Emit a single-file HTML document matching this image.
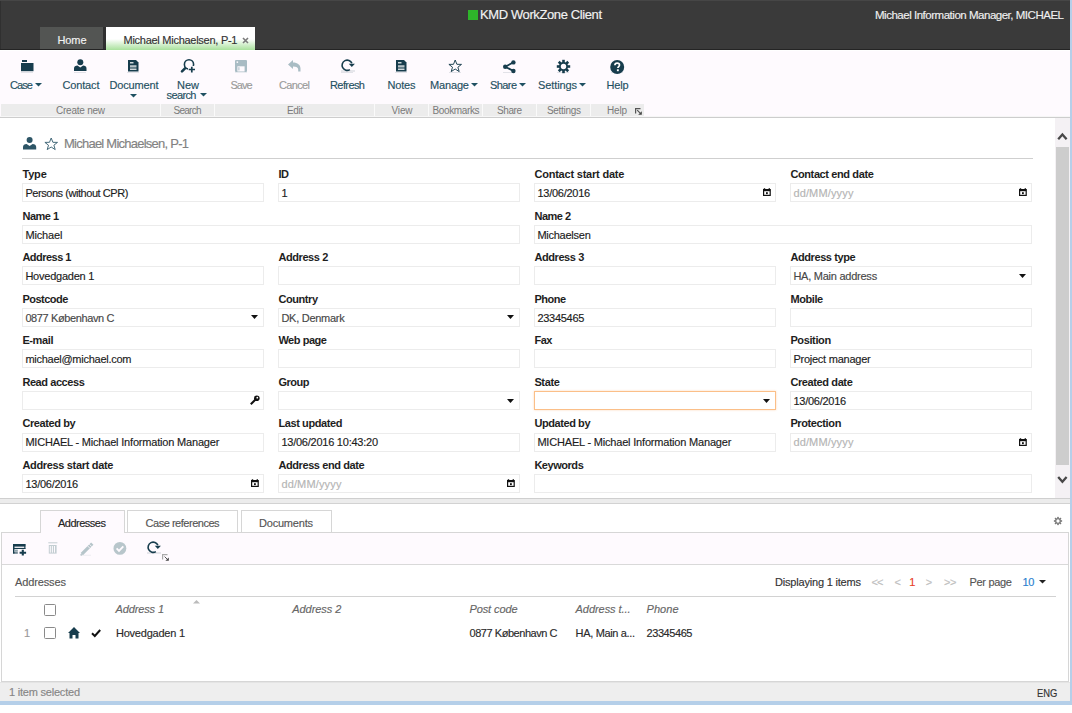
<!DOCTYPE html>
<html><head><meta charset="utf-8"><style>
html,body{margin:0;padding:0;width:1072px;height:713px;overflow:hidden;background:#fff}
body{position:relative;font-family:'Liberation Sans', sans-serif}
div{position:absolute}
.t{white-space:pre}
svg{position:absolute;display:block}
</style></head><body>
<div style="position:absolute;left:0px;top:0px;width:1072px;height:713px;background:#fff"></div>
<div style="position:absolute;left:0px;top:0px;width:1070px;height:50px;background:#3a3a3a"></div>
<div style="position:absolute;left:0px;top:0px;width:1070px;height:1px;background:#464646"></div>
<div style="position:absolute;left:0px;top:1px;width:1px;height:49px;background:#303030"></div>
<div style="position:absolute;left:468px;top:10px;width:10px;height:10px;background:#2eb52a"></div>
<div style="position:absolute;left:40px;top:27px;width:63px;height:23px;background:#535553"></div>
<div style="position:absolute;left:103px;top:27px;width:3px;height:23px;background:#2f2f2f"></div>
<div style="position:absolute;left:0px;top:49px;width:1070px;height:1px;background:#242424"></div>
<div style="position:absolute;left:106px;top:27px;width:149px;height:23px;background:linear-gradient(to bottom,#fff 0,#fff 12px,#a9e19c 23px)"></div>
<svg style="position:absolute;left:242px;top:37px" width="7" height="7" viewBox="0 0 7 7"><path d="M1 1L6 6M6 1L1 6" stroke="#7a7a7a" stroke-width="1.6"/></svg>
<div style="position:absolute;left:0px;top:50px;width:1070px;height:67px;background:#fefafe"></div>
<div style="position:absolute;left:0px;top:50px;width:1070px;height:1px;background:#ffffff"></div>
<div style="position:absolute;left:1px;top:104px;width:643px;height:12px;background:#ececec"></div>
<div style="position:absolute;left:160px;top:104px;width:1px;height:12px;background:#fafafa"></div>
<div style="position:absolute;left:214px;top:104px;width:1px;height:12px;background:#fafafa"></div>
<div style="position:absolute;left:374px;top:104px;width:1px;height:12px;background:#fafafa"></div>
<div style="position:absolute;left:428px;top:104px;width:1px;height:12px;background:#fafafa"></div>
<div style="position:absolute;left:482px;top:104px;width:1px;height:12px;background:#fafafa"></div>
<div style="position:absolute;left:536px;top:104px;width:1px;height:12px;background:#fafafa"></div>
<div style="position:absolute;left:590px;top:104px;width:1px;height:12px;background:#fafafa"></div>
<div style="position:absolute;left:0px;top:116px;width:1070px;height:1px;background:#f6f6f6"></div>
<div style="position:absolute;left:0px;top:117px;width:1070px;height:1px;background:#cdcdcd"></div>
<svg style="position:absolute;left:634.5px;top:107.5px;overflow:visible" width="7" height="7" viewBox="0 0 7 7"><path d="M0.6 5.5V0.6H5.5" fill="none" stroke="#555" stroke-width="1.2"/><path d="M2.2 2.2L5.2 5.2" stroke="#555" stroke-width="1.2"/><path d="M6.8 6.8H3.2L6.8 3.2Z" fill="#444"/></svg>
<svg style="position:absolute;left:34.7px;top:83px" width="7" height="4" viewBox="0 0 7 4"><path d="M0 0H7L3.5 3.5Z" fill="#1f5062"/></svg>
<svg style="position:absolute;left:130px;top:93.5px" width="7" height="4" viewBox="0 0 7 4"><path d="M0 0H7L3.5 3.5Z" fill="#1f5062"/></svg>
<svg style="position:absolute;left:199.5px;top:93.3px" width="7" height="4" viewBox="0 0 7 4"><path d="M0 0H7L3.5 3.5Z" fill="#1f5062"/></svg>
<svg style="position:absolute;left:471.2px;top:83px" width="7" height="4" viewBox="0 0 7 4"><path d="M0 0H7L3.5 3.5Z" fill="#1f5062"/></svg>
<svg style="position:absolute;left:518.8px;top:83px" width="7" height="4" viewBox="0 0 7 4"><path d="M0 0H7L3.5 3.5Z" fill="#1f5062"/></svg>
<svg style="position:absolute;left:578.8px;top:83px" width="7" height="4" viewBox="0 0 7 4"><path d="M0 0H7L3.5 3.5Z" fill="#1f5062"/></svg>
<svg style="position:absolute;left:21px;top:60px;overflow:visible" width="13" height="12" viewBox="0 0 13 12"><rect x="1" y="0" width="5" height="2" fill="#173d4d"/><rect x="0" y="3" width="12.5" height="8.2" fill="#173d4d"/></svg>
<svg style="position:absolute;left:74px;top:59px;overflow:visible" width="13" height="13" viewBox="0 0 13 13"><circle cx="6.3" cy="3.2" r="3" fill="#173d4d"/><path d="M0 12V9.5C0 7.5 1.5 6.6 3.5 6.6L6.3 8.6L9.1 6.6C11 6.6 12.5 7.5 12.5 9.5V12Z" fill="#173d4d"/></svg>
<svg style="position:absolute;left:128px;top:59.5px;overflow:visible" width="11" height="12" viewBox="0 0 11 12"><path d="M0 0H8L10.5 2.5V11.5H0Z" fill="#173d4d"/><rect x="2" y="2.2" width="3.5" height="1.2" fill="#fff"/><rect x="2" y="5.2" width="6.5" height="2.3" fill="#b7c3c8"/><rect x="2" y="8.6" width="6.5" height="1.2" fill="#fff"/></svg>
<svg style="position:absolute;left:180px;top:58px;overflow:visible" width="16" height="16" viewBox="0 0 16 16"><circle cx="9" cy="6.4" r="4.6" fill="none" stroke="#173d4d" stroke-width="1.6"/><path d="M2 13.3L5 10.3" stroke="#173d4d" stroke-width="2.6" stroke-linecap="round"/><rect x="8" y="8" width="8" height="7" fill="#fefafe"/><path d="M8.7 11.5H15M11.8 8.7V14.5" stroke="#173d4d" stroke-width="1.7"/></svg>
<svg style="position:absolute;left:235px;top:59.5px;overflow:visible" width="13" height="12" viewBox="0 0 13 12"><rect x="0" y="0" width="12" height="12" rx="1" fill="#a9bcc4"/><rect x="1.6" y="1.4" width="1.5" height="1.5" fill="#fefafe"/><rect x="2.4" y="6.3" width="7.2" height="5.2" fill="#fefafe"/><rect x="3.4" y="7.2" width="1" height="3.2" fill="#a9bcc4"/><rect x="0" y="12.2" width="12" height="0.8" fill="#a9bcc4" opacity="0.3"/></svg>
<svg style="position:absolute;left:288px;top:60px;overflow:visible" width="13" height="12" viewBox="0 0 13 12"><path d="M0 4.5L5 0V2.6C9.5 2.6 12.5 5 12.5 8.5V11.5H10.2V9.5C10.2 7.5 8.5 6.4 5 6.4V9Z" fill="#a9bcc4"/></svg>
<svg style="position:absolute;left:341px;top:59px;overflow:visible" width="15" height="13" viewBox="0 0 15 13"><path d="M8.85 10.6A5.1 5.1 0 1 1 10.9 4.3" fill="none" stroke="#173d4d" stroke-width="1.6"/><path d="M7.8 4.7H13.9L10.85 8.1Z" fill="#173d4d"/><rect x="0" y="11.3" width="14" height="1.4" fill="#173d4d" opacity="0.15"/></svg>
<svg style="position:absolute;left:395.5px;top:59.5px;overflow:visible" width="11" height="12" viewBox="0 0 11 12"><path d="M0 0H8L10.5 2.5V11.5H0Z" fill="#173d4d"/><rect x="2" y="2.2" width="3.5" height="1.2" fill="#fff"/><rect x="2" y="5.2" width="6.5" height="2.3" fill="#b7c3c8"/><rect x="2" y="8.6" width="6.5" height="1.2" fill="#fff"/></svg>
<svg style="position:absolute;left:448px;top:59px;overflow:visible" width="15" height="14" viewBox="0 0 15 14"><path d="M7.2 1L8.9 5.3L13.5 5.4L9.9 8.2L11.2 12.6L7.2 10L3.2 12.6L4.5 8.2L0.9 5.4L5.5 5.3Z" fill="none" stroke="#173d4d" stroke-width="0.95" stroke-linejoin="round"/></svg>
<svg style="position:absolute;left:503px;top:59.5px;overflow:visible" width="13" height="13" viewBox="0 0 13 13"><path d="M10.5 2.3L2.3 6.7L10.5 11" fill="none" stroke="#173d4d" stroke-width="1.8"/><circle cx="10.4" cy="2.4" r="2.2" fill="#173d4d"/><circle cx="2.2" cy="6.7" r="2.2" fill="#173d4d"/><circle cx="10.4" cy="11" r="2.2" fill="#173d4d"/></svg>
<svg style="position:absolute;left:557px;top:59.5px;overflow:visible" width="13" height="13" viewBox="0 0 13 13"><g><rect x="5.2" y="-0.2" width="2.6" height="3.3" fill="#173d4d" transform="rotate(0 6.5 6.5)"/><rect x="5.2" y="-0.2" width="2.6" height="3.3" fill="#173d4d" transform="rotate(45 6.5 6.5)"/><rect x="5.2" y="-0.2" width="2.6" height="3.3" fill="#173d4d" transform="rotate(90 6.5 6.5)"/><rect x="5.2" y="-0.2" width="2.6" height="3.3" fill="#173d4d" transform="rotate(135 6.5 6.5)"/><rect x="5.2" y="-0.2" width="2.6" height="3.3" fill="#173d4d" transform="rotate(180 6.5 6.5)"/><rect x="5.2" y="-0.2" width="2.6" height="3.3" fill="#173d4d" transform="rotate(225 6.5 6.5)"/><rect x="5.2" y="-0.2" width="2.6" height="3.3" fill="#173d4d" transform="rotate(270 6.5 6.5)"/><rect x="5.2" y="-0.2" width="2.6" height="3.3" fill="#173d4d" transform="rotate(315 6.5 6.5)"/><circle cx="6.5" cy="6.5" r="4.5" fill="#173d4d"/><circle cx="6.5" cy="6.5" r="2.7" fill="#fefafe"/></g></svg>
<svg style="position:absolute;left:610px;top:59.5px;overflow:visible" width="14.5" height="14" viewBox="0 0 14.5 14"><circle cx="7.2" cy="7" r="7" fill="#173d4d"/><path d="M4.9 5.3C4.9 3.9 5.9 3.1 7.2 3.1C8.6 3.1 9.5 4 9.5 5.1C9.5 6.5 7.9 6.8 7.9 8.1" fill="none" stroke="#fff" stroke-width="1.7"/><rect x="6.9" y="9.3" width="1.9" height="1.9" fill="#fff"/></svg>
<div style="position:absolute;left:21px;top:72px;width:12px;height:1px;background:rgba(23,61,77,0.12)"></div>
<div style="position:absolute;left:74px;top:72px;width:12px;height:1px;background:rgba(23,61,77,0.12)"></div>
<div style="position:absolute;left:127px;top:72px;width:12px;height:1px;background:rgba(23,61,77,0.12)"></div>
<div style="position:absolute;left:341px;top:72px;width:12px;height:1px;background:rgba(23,61,77,0.12)"></div>
<div style="position:absolute;left:395px;top:72px;width:12px;height:1px;background:rgba(23,61,77,0.12)"></div>
<div style="position:absolute;left:449px;top:72px;width:12px;height:1px;background:rgba(23,61,77,0.12)"></div>
<div style="position:absolute;left:503px;top:72px;width:12px;height:1px;background:rgba(23,61,77,0.12)"></div>
<div style="position:absolute;left:557px;top:72px;width:12px;height:1px;background:rgba(23,61,77,0.12)"></div>
<div style="position:absolute;left:611px;top:72px;width:12px;height:1px;background:rgba(23,61,77,0.12)"></div>
<div style="position:absolute;left:1055px;top:118px;width:15px;height:380px;background:#f4f1f4"></div>
<div style="position:absolute;left:1056px;top:147px;width:13px;height:318px;background:#cdcdcd"></div>
<svg style="position:absolute;left:1057px;top:130.5px;overflow:visible" width="11" height="10" viewBox="0 0 11 10"><path d="M1.2 8.3L5.4 3.6L9.6 8.3" fill="none" stroke="#474747" stroke-width="2.3"/></svg>
<svg style="position:absolute;left:1057px;top:474.5px;overflow:visible" width="11" height="10" viewBox="0 0 11 10"><path d="M1.2 1.9L5.4 6.8L9.6 1.9" fill="none" stroke="#474747" stroke-width="2.3"/></svg>
<svg style="position:absolute;left:23px;top:137px;overflow:visible" width="14" height="13" viewBox="0 0 14 13"><circle cx="6.6" cy="3" r="3" fill="#2d5566"/><path d="M0 12.5V10C0 8 1.5 6.9 3.6 6.9L6.6 9L9.6 6.9C11.7 6.9 13.2 8 13.2 10V12.5Z" fill="#2d5566"/></svg>
<svg style="position:absolute;left:43.5px;top:137px;overflow:visible" width="15" height="14" viewBox="0 0 15 14"><path d="M7.2 1L8.9 5.3L13.5 5.4L9.9 8.2L11.2 12.6L7.2 10L3.2 12.6L4.5 8.2L0.9 5.4L5.5 5.3Z" fill="none" stroke="#3b6273" stroke-width="0.95" stroke-linejoin="round"/></svg>
<div style="position:absolute;left:22px;top:158px;width:1011px;height:1px;background:#cfcfcf"></div>
<div style="position:absolute;left:22px;top:183.2px;width:242px;height:19px;box-sizing:border-box;border:1px solid #ececec;background:#fff;"></div>
<div style="position:absolute;left:278px;top:183.2px;width:242px;height:19px;box-sizing:border-box;border:1px solid #ececec;background:#fff;"></div>
<div style="position:absolute;left:534px;top:183.2px;width:242px;height:19px;box-sizing:border-box;border:1px solid #ececec;background:#fff;"></div>
<svg style="position:absolute;left:763px;top:188.2px;overflow:visible" width="8" height="8" viewBox="0 0 8 8"><path d="M1.5 0.3V1.5M6.3 0.3V1.5" stroke="#111" stroke-width="1.4"/><rect x="0.6" y="1.6" width="6.6" height="5.8" fill="none" stroke="#111" stroke-width="1.2"/><rect x="0.6" y="1.6" width="6.6" height="1.6" fill="#111"/><rect x="3" y="4.2" width="1.8" height="1.9" fill="#111"/></svg>
<div style="position:absolute;left:790px;top:183.2px;width:242px;height:19px;box-sizing:border-box;border:1px solid #ececec;background:#fff;"></div>
<svg style="position:absolute;left:1019px;top:188.2px;overflow:visible" width="8" height="8" viewBox="0 0 8 8"><path d="M1.5 0.3V1.5M6.3 0.3V1.5" stroke="#111" stroke-width="1.4"/><rect x="0.6" y="1.6" width="6.6" height="5.8" fill="none" stroke="#111" stroke-width="1.2"/><rect x="0.6" y="1.6" width="6.6" height="1.6" fill="#111"/><rect x="3" y="4.2" width="1.8" height="1.9" fill="#111"/></svg>
<div style="position:absolute;left:22px;top:224.76999999999998px;width:498px;height:19px;box-sizing:border-box;border:1px solid #ececec;background:#fff;"></div>
<div style="position:absolute;left:534px;top:224.76999999999998px;width:498px;height:19px;box-sizing:border-box;border:1px solid #ececec;background:#fff;"></div>
<div style="position:absolute;left:22px;top:266.34px;width:242px;height:19px;box-sizing:border-box;border:1px solid #ececec;background:#fff;"></div>
<div style="position:absolute;left:278px;top:266.34px;width:242px;height:19px;box-sizing:border-box;border:1px solid #ececec;background:#fff;"></div>
<div style="position:absolute;left:534px;top:266.34px;width:242px;height:19px;box-sizing:border-box;border:1px solid #ececec;background:#fff;"></div>
<div style="position:absolute;left:790px;top:266.34px;width:242px;height:19px;box-sizing:border-box;border:1px solid #ececec;background:#fff;"></div>
<svg style="position:absolute;left:1019px;top:273.84px;overflow:visible" width="7" height="4" viewBox="0 0 7 4"><path d="M0 0H7L3.5 4Z" fill="#111"/></svg>
<div style="position:absolute;left:22px;top:307.90999999999997px;width:242px;height:19px;box-sizing:border-box;border:1px solid #ececec;background:#fff;"></div>
<svg style="position:absolute;left:251px;top:315.40999999999997px;overflow:visible" width="7" height="4" viewBox="0 0 7 4"><path d="M0 0H7L3.5 4Z" fill="#111"/></svg>
<div style="position:absolute;left:278px;top:307.90999999999997px;width:242px;height:19px;box-sizing:border-box;border:1px solid #ececec;background:#fff;"></div>
<svg style="position:absolute;left:507px;top:315.40999999999997px;overflow:visible" width="7" height="4" viewBox="0 0 7 4"><path d="M0 0H7L3.5 4Z" fill="#111"/></svg>
<div style="position:absolute;left:534px;top:307.90999999999997px;width:242px;height:19px;box-sizing:border-box;border:1px solid #ececec;background:#fff;"></div>
<div style="position:absolute;left:790px;top:307.90999999999997px;width:242px;height:19px;box-sizing:border-box;border:1px solid #ececec;background:#fff;"></div>
<div style="position:absolute;left:22px;top:349.48px;width:242px;height:19px;box-sizing:border-box;border:1px solid #ececec;background:#fff;"></div>
<div style="position:absolute;left:278px;top:349.48px;width:242px;height:19px;box-sizing:border-box;border:1px solid #ececec;background:#fff;"></div>
<div style="position:absolute;left:534px;top:349.48px;width:242px;height:19px;box-sizing:border-box;border:1px solid #ececec;background:#fff;"></div>
<div style="position:absolute;left:790px;top:349.48px;width:242px;height:19px;box-sizing:border-box;border:1px solid #ececec;background:#fff;"></div>
<div style="position:absolute;left:22px;top:391.04999999999995px;width:242px;height:19px;box-sizing:border-box;border:1px solid #ececec;background:#fff;"></div>
<svg style="position:absolute;left:250px;top:395.04999999999995px;overflow:visible" width="10" height="10" viewBox="0 0 10 10"><circle cx="6.8" cy="3.2" r="2.8" fill="#111"/><circle cx="7.3" cy="2.7" r="0.9" fill="#fff"/><path d="M5.5 4.5L0.8 9.2" stroke="#111" stroke-width="2"/></svg>
<div style="position:absolute;left:278px;top:391.04999999999995px;width:242px;height:19px;box-sizing:border-box;border:1px solid #ececec;background:#fff;"></div>
<svg style="position:absolute;left:507px;top:398.54999999999995px;overflow:visible" width="7" height="4" viewBox="0 0 7 4"><path d="M0 0H7L3.5 4Z" fill="#111"/></svg>
<div style="position:absolute;left:534px;top:391.04999999999995px;width:242px;height:19px;box-sizing:border-box;border:1px solid #fbbf88;background:#fff;box-shadow:0 0 2px rgba(251,170,100,0.45);"></div>
<svg style="position:absolute;left:763px;top:398.54999999999995px;overflow:visible" width="7" height="4" viewBox="0 0 7 4"><path d="M0 0H7L3.5 4Z" fill="#111"/></svg>
<div style="position:absolute;left:790px;top:391.04999999999995px;width:242px;height:19px;box-sizing:border-box;border:1px solid #ececec;background:#fff;"></div>
<div style="position:absolute;left:22px;top:432.62px;width:242px;height:19px;box-sizing:border-box;border:1px solid #ececec;background:#fff;"></div>
<div style="position:absolute;left:278px;top:432.62px;width:242px;height:19px;box-sizing:border-box;border:1px solid #ececec;background:#fff;"></div>
<div style="position:absolute;left:534px;top:432.62px;width:242px;height:19px;box-sizing:border-box;border:1px solid #ececec;background:#fff;"></div>
<div style="position:absolute;left:790px;top:432.62px;width:242px;height:19px;box-sizing:border-box;border:1px solid #ececec;background:#fff;"></div>
<svg style="position:absolute;left:1019px;top:437.62px;overflow:visible" width="8" height="8" viewBox="0 0 8 8"><path d="M1.5 0.3V1.5M6.3 0.3V1.5" stroke="#111" stroke-width="1.4"/><rect x="0.6" y="1.6" width="6.6" height="5.8" fill="none" stroke="#111" stroke-width="1.2"/><rect x="0.6" y="1.6" width="6.6" height="1.6" fill="#111"/><rect x="3" y="4.2" width="1.8" height="1.9" fill="#111"/></svg>
<div style="position:absolute;left:22px;top:474.19px;width:242px;height:19px;box-sizing:border-box;border:1px solid #ececec;background:#fff;"></div>
<svg style="position:absolute;left:251px;top:479.19px;overflow:visible" width="8" height="8" viewBox="0 0 8 8"><path d="M1.5 0.3V1.5M6.3 0.3V1.5" stroke="#111" stroke-width="1.4"/><rect x="0.6" y="1.6" width="6.6" height="5.8" fill="none" stroke="#111" stroke-width="1.2"/><rect x="0.6" y="1.6" width="6.6" height="1.6" fill="#111"/><rect x="3" y="4.2" width="1.8" height="1.9" fill="#111"/></svg>
<div style="position:absolute;left:278px;top:474.19px;width:242px;height:19px;box-sizing:border-box;border:1px solid #ececec;background:#fff;"></div>
<svg style="position:absolute;left:507px;top:479.19px;overflow:visible" width="8" height="8" viewBox="0 0 8 8"><path d="M1.5 0.3V1.5M6.3 0.3V1.5" stroke="#111" stroke-width="1.4"/><rect x="0.6" y="1.6" width="6.6" height="5.8" fill="none" stroke="#111" stroke-width="1.2"/><rect x="0.6" y="1.6" width="6.6" height="1.6" fill="#111"/><rect x="3" y="4.2" width="1.8" height="1.9" fill="#111"/></svg>
<div style="position:absolute;left:534px;top:474.19px;width:498px;height:19px;box-sizing:border-box;border:1px solid #ececec;background:#fff;"></div>
<div style="position:absolute;left:0px;top:498px;width:1070px;height:1px;background:#cfcfcf"></div>
<div style="position:absolute;left:0px;top:499px;width:1070px;height:4px;background:#ececec"></div>
<div style="position:absolute;left:0px;top:503px;width:1070px;height:1px;background:#d2d2d2"></div>
<svg style="position:absolute;left:1054px;top:517px;overflow:visible" width="8" height="8" viewBox="0 0 13 13"><g><rect x="5.2" y="-0.2" width="2.6" height="3.3" fill="#777" transform="rotate(0 6.5 6.5)"/><rect x="5.2" y="-0.2" width="2.6" height="3.3" fill="#777" transform="rotate(45 6.5 6.5)"/><rect x="5.2" y="-0.2" width="2.6" height="3.3" fill="#777" transform="rotate(90 6.5 6.5)"/><rect x="5.2" y="-0.2" width="2.6" height="3.3" fill="#777" transform="rotate(135 6.5 6.5)"/><rect x="5.2" y="-0.2" width="2.6" height="3.3" fill="#777" transform="rotate(180 6.5 6.5)"/><rect x="5.2" y="-0.2" width="2.6" height="3.3" fill="#777" transform="rotate(225 6.5 6.5)"/><rect x="5.2" y="-0.2" width="2.6" height="3.3" fill="#777" transform="rotate(270 6.5 6.5)"/><rect x="5.2" y="-0.2" width="2.6" height="3.3" fill="#777" transform="rotate(315 6.5 6.5)"/><circle cx="6.5" cy="6.5" r="4.5" fill="#777"/><circle cx="6.5" cy="6.5" r="2.7" fill="#fff"/></g></svg>
<div style="position:absolute;left:1px;top:532px;width:1068px;height:150px;box-sizing:border-box;border:1px solid #d6d6d6;border-top:none;background:#fff"></div>
<div style="position:absolute;left:1px;top:532px;width:1068px;height:1px;background:#d6d6d6"></div>
<div style="position:absolute;left:2px;top:533px;width:1066px;height:31px;background:#fefafe"></div>
<div style="position:absolute;left:2px;top:563.5px;width:1066px;height:1px;background:#d9d9d9"></div>
<div style="position:absolute;left:40px;top:510px;width:85px;height:23px;box-sizing:border-box;border:1px solid #d6d6d6;border-bottom:none;background:#fefafe"></div>
<div style="position:absolute;left:127px;top:510px;width:111px;height:22px;box-sizing:border-box;border:1px solid #d6d6d6;border-bottom:none;background:#fff"></div>
<div style="position:absolute;left:240.5px;top:510px;width:91px;height:22px;box-sizing:border-box;border:1px solid #d6d6d6;border-bottom:none;background:#fff"></div>
<svg style="position:absolute;left:13px;top:543.5px;overflow:visible" width="14" height="12" viewBox="0 0 14 12"><rect x="0" y="0" width="12.4" height="2.6" fill="#173d4d"/><rect x="0" y="3.9" width="12.4" height="1.1" fill="#173d4d"/><rect x="11.3" y="0" width="1.1" height="5" fill="#173d4d"/><rect x="0" y="0" width="1.5" height="9.5" fill="#173d4d"/><rect x="1.5" y="5.6" width="3.3" height="2.2" fill="#8fa3ab"/><rect x="0" y="8.4" width="4.8" height="1.1" fill="#173d4d"/><path d="M6.6 8.7H13.1M9.8 5.8V11.6" stroke="#173d4d" stroke-width="2.1"/></svg>
<svg style="position:absolute;left:47.5px;top:542px;overflow:visible" width="10" height="13" viewBox="0 0 10 13"><rect x="0.3" y="0.3" width="9.1" height="1" fill="#c3ced2"/><rect x="0.8" y="3" width="7.8" height="8.6" fill="#c3ced2"/><rect x="1.8" y="4" width="1" height="6.6" fill="#fefafe"/><rect x="3.9" y="4" width="1" height="6.6" fill="#fefafe"/><rect x="6" y="4" width="1" height="6.6" fill="#fefafe"/></svg>
<svg style="position:absolute;left:80px;top:541.5px;overflow:visible" width="14" height="14" viewBox="0 0 14 14"><path d="M1.8 12.2L12.3 1.7" stroke="#b6c5ca" stroke-width="3.3"/><path d="M0.6 13.4L1.8 12.2" stroke="#b6c5ca" stroke-width="1.5"/><path d="M7.6 3.9L10.1 6.4M9.3 2.2L11.8 4.7" stroke="#fefafe" stroke-width="0.8"/><rect x="1" y="12.8" width="10" height="0.8" fill="#b6c5ca" opacity="0.3"/></svg>
<svg style="position:absolute;left:113px;top:542px;overflow:visible" width="14" height="13" viewBox="0 0 14 13"><circle cx="6.9" cy="6.4" r="6.4" fill="#b8c6cb"/><path d="M3.6 6.4L6 8.8L10.3 4.4" fill="none" stroke="#fefafe" stroke-width="1.9"/></svg>
<svg style="position:absolute;left:147.4px;top:541.3px;overflow:visible" width="15" height="13" viewBox="0 0 15 13"><path d="M8.85 10.6A5.1 5.1 0 1 1 10.9 4.3" fill="none" stroke="#173d4d" stroke-width="1.6"/><path d="M7.8 4.7H13.9L10.85 8.1Z" fill="#173d4d"/><rect x="0" y="11.3" width="14" height="1.4" fill="#173d4d" opacity="0.15"/></svg>
<svg style="position:absolute;left:161.5px;top:554px;overflow:visible" width="7" height="7" viewBox="0 0 7 7"><path d="M0.6 5.5V0.6H5.5" fill="none" stroke="#aaa" stroke-width="1.2"/><path d="M2.6 2.6L5.4 5.4" stroke="#555" stroke-width="1"/><path d="M6.8 6.8H3.4L6.8 3.4Z" fill="#444"/></svg>
<div style="position:absolute;left:15px;top:596px;width:1041px;height:1px;background:#d2d2d2"></div>
<svg style="position:absolute;left:1038.5px;top:580px;overflow:visible" width="7" height="4" viewBox="0 0 7 4"><path d="M0 0H7L3.5 3.5Z" fill="#222"/></svg>
<div style="position:absolute;left:44px;top:604px;width:11.5px;height:11.5px;box-sizing:border-box;border:1.2px solid #8a8a8a;border-radius:1.5px;background:#fff"></div>
<svg style="position:absolute;left:193px;top:599.5px;overflow:visible" width="7" height="4" viewBox="0 0 7 4"><path d="M0 3.5H7L3.5 0Z" fill="#bbb"/></svg>
<div style="position:absolute;left:44px;top:627px;width:11.5px;height:11.5px;box-sizing:border-box;border:1.2px solid #8a8a8a;border-radius:1.5px;background:#fff"></div>
<svg style="position:absolute;left:67.5px;top:627px;overflow:visible" width="12" height="11.5" viewBox="0 0 12 11.5"><path d="M6 0L12 6H10.5V11.5H7.5V8H4.5V11.5H1.5V6H0Z" fill="#173d4d"/></svg>
<svg style="position:absolute;left:91px;top:628.5px;overflow:visible" width="10" height="8" viewBox="0 0 10 8"><path d="M1 4.2L3.8 7L9.2 1" fill="none" stroke="#111" stroke-width="2"/></svg>
<div style="position:absolute;left:0px;top:682px;width:1070px;height:19px;background:#eeeeee"></div>
<div style="position:absolute;left:0px;top:682px;width:1070px;height:1px;background:#e4e4e4"></div>
<div style="position:absolute;left:1070px;top:0px;width:2px;height:705px;background:#b5cfe9"></div>
<div style="position:absolute;left:0px;top:701px;width:1072px;height:4px;background:#b5cfe9"></div>
<div class="t" style="-webkit-text-stroke:0.15px currentColor;left:480px;top:7.9px;font:13px 'Liberation Sans', sans-serif;line-height:13px;color:#f2f2f2;letter-spacing:-0.393px;">KMD WorkZone Client</div>
<div class="t" style="-webkit-text-stroke:0.15px currentColor;left:875px;top:10px;font:11.5px 'Liberation Sans', sans-serif;line-height:11.5px;color:#f0f0f0;letter-spacing:-0.480px;">Michael Information Manager, MICHAEL</div>
<div class="t" style="-webkit-text-stroke:0.15px currentColor;left:57.5px;top:35px;font:11px 'Liberation Sans', sans-serif;line-height:11px;color:#f4f4f4;letter-spacing:-0.115px;">Home</div>
<div class="t" style="-webkit-text-stroke:0.15px currentColor;left:123.5px;top:35px;font:11px 'Liberation Sans', sans-serif;line-height:11px;color:#333;letter-spacing:-0.266px;">Michael Michaelsen, P-1</div>
<div class="t" style="left:56px;top:106px;font:10px 'Liberation Sans', sans-serif;line-height:10px;color:#7a7a7a;letter-spacing:-0.238px;">Create new</div>
<div class="t" style="left:173.5px;top:106px;font:10px 'Liberation Sans', sans-serif;line-height:10px;color:#7a7a7a;letter-spacing:-0.738px;">Search</div>
<div class="t" style="left:287px;top:106px;font:10px 'Liberation Sans', sans-serif;line-height:10px;color:#7a7a7a;letter-spacing:-0.411px;">Edit</div>
<div class="t" style="left:391.5px;top:106px;font:10px 'Liberation Sans', sans-serif;line-height:10px;color:#7a7a7a;letter-spacing:-0.167px;">View</div>
<div class="t" style="left:432.5px;top:106px;font:10px 'Liberation Sans', sans-serif;line-height:10px;color:#7a7a7a;letter-spacing:-0.377px;">Bookmarks</div>
<div class="t" style="left:497px;top:106px;font:10px 'Liberation Sans', sans-serif;line-height:10px;color:#7a7a7a;letter-spacing:-0.422px;">Share</div>
<div class="t" style="left:547px;top:106px;font:10px 'Liberation Sans', sans-serif;line-height:10px;color:#7a7a7a;letter-spacing:-0.306px;">Settings</div>
<div class="t" style="left:607px;top:106px;font:10px 'Liberation Sans', sans-serif;line-height:10px;color:#7a7a7a;letter-spacing:-0.193px;">Help</div>
<div class="t" style="-webkit-text-stroke:0.15px currentColor;left:10px;top:80px;font:11px 'Liberation Sans', sans-serif;line-height:11px;color:#1f5062;letter-spacing:-0.896px;">Case</div>
<div class="t" style="-webkit-text-stroke:0.15px currentColor;left:62.5px;top:80px;font:11px 'Liberation Sans', sans-serif;line-height:11px;color:#1f5062;letter-spacing:-0.154px;">Contact</div>
<div class="t" style="-webkit-text-stroke:0.15px currentColor;left:109.5px;top:80px;font:11px 'Liberation Sans', sans-serif;line-height:11px;color:#1f5062;letter-spacing:-0.163px;">Document</div>
<div class="t" style="-webkit-text-stroke:0.15px currentColor;left:177px;top:80px;font:11px 'Liberation Sans', sans-serif;line-height:11px;color:#1f5062;letter-spacing:-0.008px;">New</div>
<div class="t" style="-webkit-text-stroke:0.15px currentColor;left:166.5px;top:89.5px;font:11px 'Liberation Sans', sans-serif;line-height:11px;color:#1f5062;letter-spacing:-0.606px;">search</div>
<div class="t" style="-webkit-text-stroke:0.15px currentColor;left:230.5px;top:80px;font:11px 'Liberation Sans', sans-serif;line-height:11px;color:#9a9a9a;letter-spacing:-1.026px;">Save</div>
<div class="t" style="-webkit-text-stroke:0.15px currentColor;left:279px;top:80px;font:11px 'Liberation Sans', sans-serif;line-height:11px;color:#9a9a9a;letter-spacing:-0.650px;">Cancel</div>
<div class="t" style="-webkit-text-stroke:0.15px currentColor;left:330px;top:80px;font:11px 'Liberation Sans', sans-serif;line-height:11px;color:#1f5062;letter-spacing:-0.589px;">Refresh</div>
<div class="t" style="-webkit-text-stroke:0.15px currentColor;left:387.5px;top:80px;font:11px 'Liberation Sans', sans-serif;line-height:11px;color:#1f5062;letter-spacing:-0.188px;">Notes</div>
<div class="t" style="-webkit-text-stroke:0.15px currentColor;left:430px;top:80px;font:11px 'Liberation Sans', sans-serif;line-height:11px;color:#1f5062;letter-spacing:-0.153px;">Manage</div>
<div class="t" style="-webkit-text-stroke:0.15px currentColor;left:490px;top:80px;font:11px 'Liberation Sans', sans-serif;line-height:11px;color:#1f5062;letter-spacing:-0.590px;">Share</div>
<div class="t" style="-webkit-text-stroke:0.15px currentColor;left:538px;top:80px;font:11px 'Liberation Sans', sans-serif;line-height:11px;color:#1f5062;letter-spacing:-0.107px;">Settings</div>
<div class="t" style="-webkit-text-stroke:0.15px currentColor;left:606.5px;top:80px;font:11px 'Liberation Sans', sans-serif;line-height:11px;color:#1f5062;letter-spacing:-0.208px;">Help</div>
<div class="t" style="-webkit-text-stroke:0.15px currentColor;left:64px;top:137px;font:13px 'Liberation Sans', sans-serif;line-height:13px;color:#828282;letter-spacing:-0.756px;">Michael Michaelsen, P-1</div>
<div class="t" style="left:22.4px;top:169.0px;font:bold 11px 'Liberation Sans', sans-serif;line-height:11px;color:#1e1e1e;letter-spacing:-0.153px;">Type</div>
<div class="t" style="-webkit-text-stroke:0.15px currentColor;left:25.4px;top:188.0px;font:11px 'Liberation Sans', sans-serif;line-height:11px;color:#1c1c1c;letter-spacing:-0.444px;">Persons (without CPR)</div>
<div class="t" style="left:278.4px;top:169.0px;font:bold 11px 'Liberation Sans', sans-serif;line-height:11px;color:#1e1e1e;letter-spacing:-0.385px;">ID</div>
<div class="t" style="-webkit-text-stroke:0.15px currentColor;left:281.4px;top:188.0px;font:11px 'Liberation Sans', sans-serif;line-height:11px;color:#1c1c1c;letter-spacing:0.000px;">1</div>
<div class="t" style="left:534.4px;top:169.0px;font:bold 11px 'Liberation Sans', sans-serif;line-height:11px;color:#1e1e1e;letter-spacing:-0.208px;">Contact start date</div>
<div class="t" style="-webkit-text-stroke:0.15px currentColor;left:537.4px;top:188.0px;font:11px 'Liberation Sans', sans-serif;line-height:11px;color:#1c1c1c;letter-spacing:-0.248px;">13/06/2016</div>
<div class="t" style="left:790.4px;top:169.0px;font:bold 11px 'Liberation Sans', sans-serif;line-height:11px;color:#1e1e1e;letter-spacing:-0.390px;">Contact end date</div>
<div class="t" style="-webkit-text-stroke:0.15px currentColor;left:793.4px;top:188.0px;font:11px 'Liberation Sans', sans-serif;line-height:11px;color:#b4b4b4;letter-spacing:0.146px;">dd/MM/yyyy</div>
<div class="t" style="left:22.4px;top:210.57px;font:bold 11px 'Liberation Sans', sans-serif;line-height:11px;color:#1e1e1e;letter-spacing:-0.457px;">Name 1</div>
<div class="t" style="-webkit-text-stroke:0.15px currentColor;left:25.4px;top:229.57px;font:11px 'Liberation Sans', sans-serif;line-height:11px;color:#1c1c1c;letter-spacing:-0.151px;">Michael</div>
<div class="t" style="left:534.4px;top:210.57px;font:bold 11px 'Liberation Sans', sans-serif;line-height:11px;color:#1e1e1e;letter-spacing:-0.457px;">Name 2</div>
<div class="t" style="-webkit-text-stroke:0.15px currentColor;left:537.4px;top:229.57px;font:11px 'Liberation Sans', sans-serif;line-height:11px;color:#1c1c1c;letter-spacing:-0.250px;">Michaelsen</div>
<div class="t" style="left:22.4px;top:252.14px;font:bold 11px 'Liberation Sans', sans-serif;line-height:11px;color:#1e1e1e;letter-spacing:-0.525px;">Address 1</div>
<div class="t" style="-webkit-text-stroke:0.15px currentColor;left:25.4px;top:271.14px;font:11px 'Liberation Sans', sans-serif;line-height:11px;color:#1c1c1c;letter-spacing:-0.233px;">Hovedgaden 1</div>
<div class="t" style="left:278.4px;top:252.14px;font:bold 11px 'Liberation Sans', sans-serif;line-height:11px;color:#1e1e1e;letter-spacing:-0.414px;">Address 2</div>
<div class="t" style="left:534.4px;top:252.14px;font:bold 11px 'Liberation Sans', sans-serif;line-height:11px;color:#1e1e1e;letter-spacing:-0.414px;">Address 3</div>
<div class="t" style="left:790.4px;top:252.14px;font:bold 11px 'Liberation Sans', sans-serif;line-height:11px;color:#1e1e1e;letter-spacing:-0.407px;">Address type</div>
<div class="t" style="-webkit-text-stroke:0.15px currentColor;left:793.4px;top:271.14px;font:11px 'Liberation Sans', sans-serif;line-height:11px;color:#474747;letter-spacing:-0.246px;">HA, Main address</div>
<div class="t" style="left:22.4px;top:293.71000000000004px;font:bold 11px 'Liberation Sans', sans-serif;line-height:11px;color:#1e1e1e;letter-spacing:-0.502px;">Postcode</div>
<div class="t" style="-webkit-text-stroke:0.15px currentColor;left:25.4px;top:312.71px;font:11px 'Liberation Sans', sans-serif;line-height:11px;color:#474747;letter-spacing:-0.386px;">0877 København C</div>
<div class="t" style="left:278.4px;top:293.71000000000004px;font:bold 11px 'Liberation Sans', sans-serif;line-height:11px;color:#1e1e1e;letter-spacing:-0.422px;">Country</div>
<div class="t" style="-webkit-text-stroke:0.15px currentColor;left:281.4px;top:312.71px;font:11px 'Liberation Sans', sans-serif;line-height:11px;color:#474747;letter-spacing:-0.270px;">DK, Denmark</div>
<div class="t" style="left:534.4px;top:293.71000000000004px;font:bold 11px 'Liberation Sans', sans-serif;line-height:11px;color:#1e1e1e;letter-spacing:-0.471px;">Phone</div>
<div class="t" style="-webkit-text-stroke:0.15px currentColor;left:537.4px;top:312.71px;font:11px 'Liberation Sans', sans-serif;line-height:11px;color:#1c1c1c;letter-spacing:-0.275px;">23345465</div>
<div class="t" style="left:790.4px;top:293.71000000000004px;font:bold 11px 'Liberation Sans', sans-serif;line-height:11px;color:#1e1e1e;letter-spacing:-0.407px;">Mobile</div>
<div class="t" style="left:22.4px;top:335.28px;font:bold 11px 'Liberation Sans', sans-serif;line-height:11px;color:#1e1e1e;letter-spacing:-0.385px;">E-mail</div>
<div class="t" style="-webkit-text-stroke:0.15px currentColor;left:25.4px;top:354.28000000000003px;font:11px 'Liberation Sans', sans-serif;line-height:11px;color:#1c1c1c;letter-spacing:-0.262px;">michael@michael.com</div>
<div class="t" style="left:278.4px;top:335.28px;font:bold 11px 'Liberation Sans', sans-serif;line-height:11px;color:#1e1e1e;letter-spacing:-0.453px;">Web page</div>
<div class="t" style="left:534.4px;top:335.28px;font:bold 11px 'Liberation Sans', sans-serif;line-height:11px;color:#1e1e1e;letter-spacing:-0.443px;">Fax</div>
<div class="t" style="left:790.4px;top:335.28px;font:bold 11px 'Liberation Sans', sans-serif;line-height:11px;color:#1e1e1e;letter-spacing:-0.380px;">Position</div>
<div class="t" style="-webkit-text-stroke:0.15px currentColor;left:793.4px;top:354.28000000000003px;font:11px 'Liberation Sans', sans-serif;line-height:11px;color:#1c1c1c;letter-spacing:-0.242px;">Project manager</div>
<div class="t" style="left:22.4px;top:376.85px;font:bold 11px 'Liberation Sans', sans-serif;line-height:11px;color:#1e1e1e;letter-spacing:-0.424px;">Read access</div>
<div class="t" style="left:278.4px;top:376.85px;font:bold 11px 'Liberation Sans', sans-serif;line-height:11px;color:#1e1e1e;letter-spacing:-0.462px;">Group</div>
<div class="t" style="left:534.4px;top:376.85px;font:bold 11px 'Liberation Sans', sans-serif;line-height:11px;color:#1e1e1e;letter-spacing:-0.377px;">State</div>
<div class="t" style="left:790.4px;top:376.85px;font:bold 11px 'Liberation Sans', sans-serif;line-height:11px;color:#1e1e1e;letter-spacing:-0.389px;">Created date</div>
<div class="t" style="-webkit-text-stroke:0.15px currentColor;left:793.4px;top:395.84999999999997px;font:11px 'Liberation Sans', sans-serif;line-height:11px;color:#1c1c1c;letter-spacing:-0.248px;">13/06/2016</div>
<div class="t" style="left:22.4px;top:418.42px;font:bold 11px 'Liberation Sans', sans-serif;line-height:11px;color:#1e1e1e;letter-spacing:-0.398px;">Created by</div>
<div class="t" style="-webkit-text-stroke:0.15px currentColor;left:25.4px;top:437.42px;font:11px 'Liberation Sans', sans-serif;line-height:11px;color:#1c1c1c;letter-spacing:-0.187px;">MICHAEL - Michael Information Manager</div>
<div class="t" style="left:278.4px;top:418.42px;font:bold 11px 'Liberation Sans', sans-serif;line-height:11px;color:#1e1e1e;letter-spacing:-0.399px;">Last updated</div>
<div class="t" style="-webkit-text-stroke:0.15px currentColor;left:281.4px;top:437.42px;font:11px 'Liberation Sans', sans-serif;line-height:11px;color:#1c1c1c;letter-spacing:-0.239px;">13/06/2016 10:43:20</div>
<div class="t" style="left:534.4px;top:418.42px;font:bold 11px 'Liberation Sans', sans-serif;line-height:11px;color:#1e1e1e;letter-spacing:-0.419px;">Updated by</div>
<div class="t" style="-webkit-text-stroke:0.15px currentColor;left:537.4px;top:437.42px;font:11px 'Liberation Sans', sans-serif;line-height:11px;color:#1c1c1c;letter-spacing:-0.187px;">MICHAEL - Michael Information Manager</div>
<div class="t" style="left:790.4px;top:418.42px;font:bold 11px 'Liberation Sans', sans-serif;line-height:11px;color:#1e1e1e;letter-spacing:-0.381px;">Protection</div>
<div class="t" style="-webkit-text-stroke:0.15px currentColor;left:793.4px;top:437.42px;font:11px 'Liberation Sans', sans-serif;line-height:11px;color:#b4b4b4;letter-spacing:0.146px;">dd/MM/yyyy</div>
<div class="t" style="left:22.4px;top:459.99px;font:bold 11px 'Liberation Sans', sans-serif;line-height:11px;color:#1e1e1e;letter-spacing:-0.329px;">Address start date</div>
<div class="t" style="-webkit-text-stroke:0.15px currentColor;left:25.4px;top:478.99px;font:11px 'Liberation Sans', sans-serif;line-height:11px;color:#1c1c1c;letter-spacing:-0.248px;">13/06/2016</div>
<div class="t" style="left:278.4px;top:459.99px;font:bold 11px 'Liberation Sans', sans-serif;line-height:11px;color:#1e1e1e;letter-spacing:-0.404px;">Address end date</div>
<div class="t" style="-webkit-text-stroke:0.15px currentColor;left:281.4px;top:478.99px;font:11px 'Liberation Sans', sans-serif;line-height:11px;color:#b4b4b4;letter-spacing:0.146px;">dd/MM/yyyy</div>
<div class="t" style="left:534.4px;top:459.99px;font:bold 11px 'Liberation Sans', sans-serif;line-height:11px;color:#1e1e1e;letter-spacing:-0.460px;">Keywords</div>
<div class="t" style="-webkit-text-stroke:0.15px currentColor;left:58px;top:518px;font:11px 'Liberation Sans', sans-serif;line-height:11px;color:#222;letter-spacing:-0.498px;">Addresses</div>
<div class="t" style="-webkit-text-stroke:0.15px currentColor;left:145.6px;top:518px;font:11px 'Liberation Sans', sans-serif;line-height:11px;color:#555;letter-spacing:-0.480px;">Case references</div>
<div class="t" style="-webkit-text-stroke:0.15px currentColor;left:259px;top:518px;font:11px 'Liberation Sans', sans-serif;line-height:11px;color:#555;letter-spacing:-0.205px;">Documents</div>
<div class="t" style="-webkit-text-stroke:0.15px currentColor;left:15px;top:577px;font:11px 'Liberation Sans', sans-serif;line-height:11px;color:#555;letter-spacing:-0.123px;">Addresses</div>
<div class="t" style="-webkit-text-stroke:0.15px currentColor;left:775px;top:577px;font:11px 'Liberation Sans', sans-serif;line-height:11px;color:#333;letter-spacing:-0.192px;">Displaying 1 items</div>
<div class="t" style="-webkit-text-stroke:0.15px currentColor;left:871.5px;top:577px;font:11px 'Liberation Sans', sans-serif;line-height:11px;color:#c0c0c0;letter-spacing:-0.859px;">&lt;&lt;</div>
<div class="t" style="-webkit-text-stroke:0.15px currentColor;left:894.5px;top:577px;font:11px 'Liberation Sans', sans-serif;line-height:11px;color:#c0c0c0;letter-spacing:0.000px;">&lt;</div>
<div class="t" style="-webkit-text-stroke:0.15px currentColor;left:909.3px;top:577px;font:11px 'Liberation Sans', sans-serif;line-height:11px;color:#e8412a;letter-spacing:0.000px;">1</div>
<div class="t" style="-webkit-text-stroke:0.15px currentColor;left:925.8px;top:577px;font:11px 'Liberation Sans', sans-serif;line-height:11px;color:#c0c0c0;letter-spacing:0.000px;">&gt;</div>
<div class="t" style="-webkit-text-stroke:0.15px currentColor;left:944px;top:577px;font:11px 'Liberation Sans', sans-serif;line-height:11px;color:#c0c0c0;letter-spacing:-0.359px;">&gt;&gt;</div>
<div class="t" style="-webkit-text-stroke:0.15px currentColor;left:969.5px;top:577px;font:11px 'Liberation Sans', sans-serif;line-height:11px;color:#555;letter-spacing:-0.308px;">Per page</div>
<div class="t" style="-webkit-text-stroke:0.15px currentColor;left:1022.5px;top:577px;font:11px 'Liberation Sans', sans-serif;line-height:11px;color:#2a7fd0;letter-spacing:-0.250px;">10</div>
<div class="t" style="-webkit-text-stroke:0.15px currentColor;left:115.5px;top:604px;font:italic 11px 'Liberation Sans', sans-serif;line-height:11px;color:#666;letter-spacing:-0.129px;">Address 1</div>
<div class="t" style="-webkit-text-stroke:0.15px currentColor;left:292.3px;top:604px;font:italic 11px 'Liberation Sans', sans-serif;line-height:11px;color:#666;letter-spacing:-0.066px;">Address 2</div>
<div class="t" style="-webkit-text-stroke:0.15px currentColor;left:469.5px;top:604px;font:italic 11px 'Liberation Sans', sans-serif;line-height:11px;color:#666;letter-spacing:-0.115px;">Post code</div>
<div class="t" style="-webkit-text-stroke:0.15px currentColor;left:575.6px;top:604px;font:italic 11px 'Liberation Sans', sans-serif;line-height:11px;color:#666;letter-spacing:-0.058px;">Address t...</div>
<div class="t" style="-webkit-text-stroke:0.15px currentColor;left:646.5px;top:604px;font:italic 11px 'Liberation Sans', sans-serif;line-height:11px;color:#666;letter-spacing:0.047px;">Phone</div>
<div class="t" style="-webkit-text-stroke:0.15px currentColor;left:24px;top:628px;font:11px 'Liberation Sans', sans-serif;line-height:11px;color:#999;letter-spacing:0.000px;">1</div>
<div class="t" style="-webkit-text-stroke:0.15px currentColor;left:116px;top:628px;font:11px 'Liberation Sans', sans-serif;line-height:11px;color:#2a2a2a;letter-spacing:-0.233px;">Hovedgaden 1</div>
<div class="t" style="-webkit-text-stroke:0.15px currentColor;left:469.5px;top:628px;font:11px 'Liberation Sans', sans-serif;line-height:11px;color:#2a2a2a;letter-spacing:-0.453px;">0877 København C</div>
<div class="t" style="-webkit-text-stroke:0.15px currentColor;left:575.6px;top:628px;font:11px 'Liberation Sans', sans-serif;line-height:11px;color:#2a2a2a;letter-spacing:-0.340px;">HA, Main a...</div>
<div class="t" style="-webkit-text-stroke:0.15px currentColor;left:646.5px;top:628px;font:11px 'Liberation Sans', sans-serif;line-height:11px;color:#2a2a2a;letter-spacing:-0.422px;">23345465</div>
<div class="t" style="-webkit-text-stroke:0.15px currentColor;left:9px;top:687px;font:11px 'Liberation Sans', sans-serif;line-height:11px;color:#868686;letter-spacing:-0.213px;">1 item selected</div>
<div class="t" style="-webkit-text-stroke:0.15px currentColor;left:1037px;top:687.5px;font:11px 'Liberation Sans', sans-serif;line-height:11px;color:#333;letter-spacing:0.000px;transform:scaleX(0.8536);transform-origin:0 0;">ENG</div>
</body></html>
